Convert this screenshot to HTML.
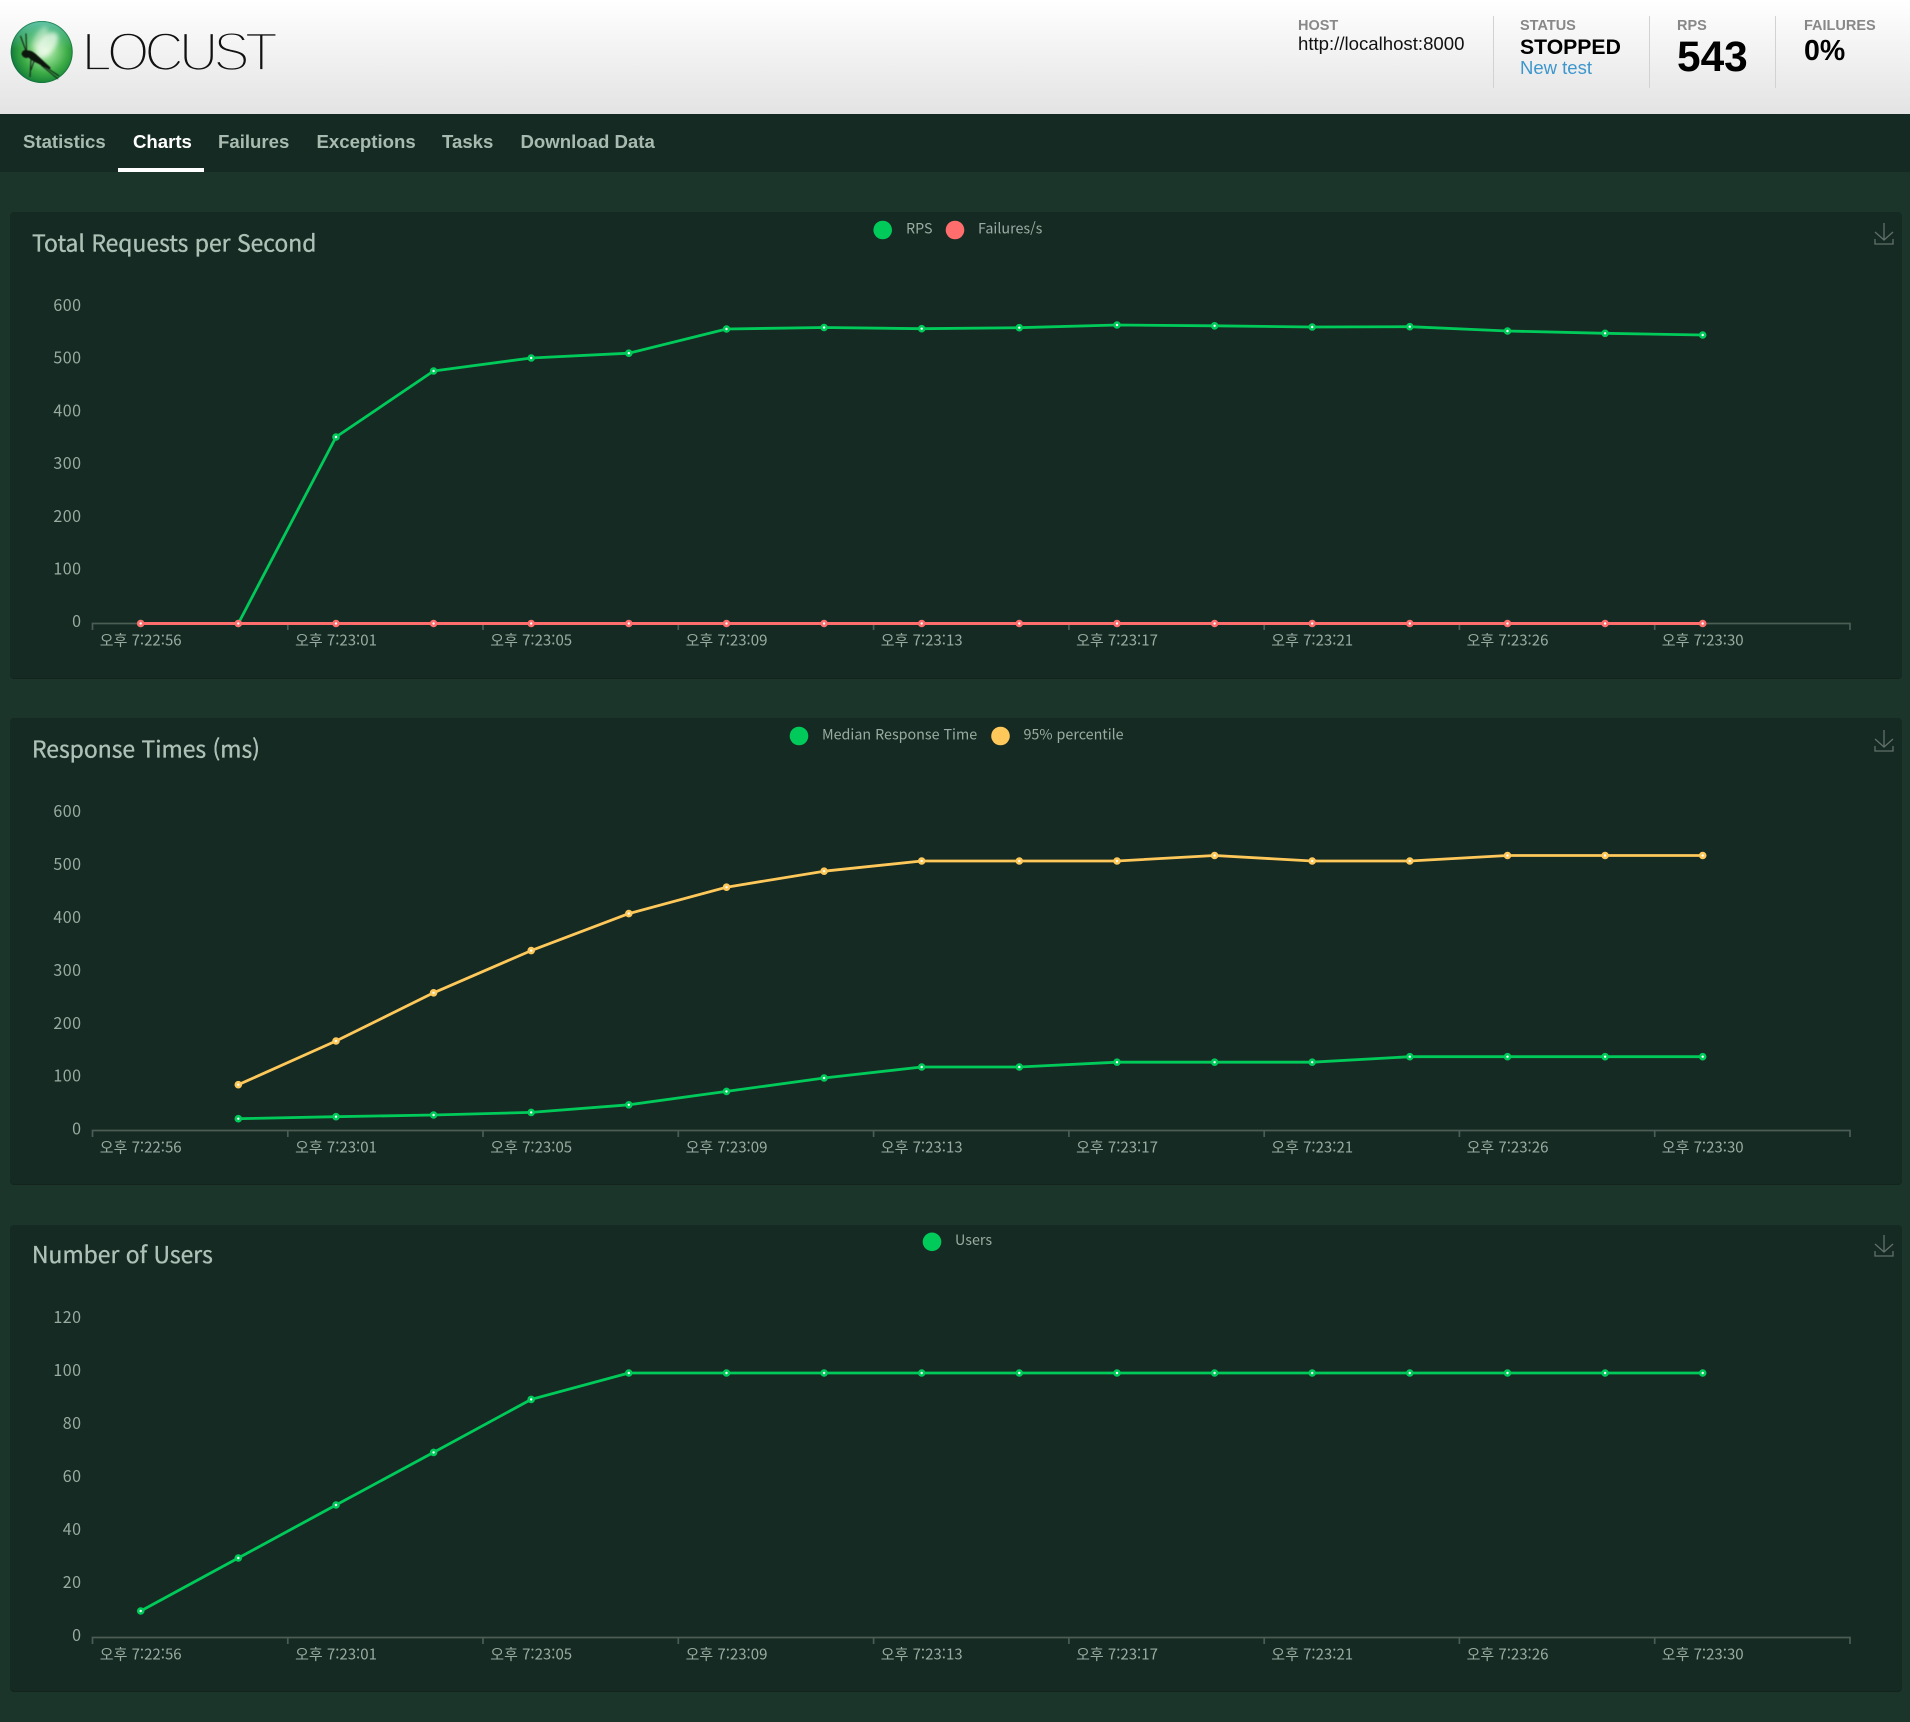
<!DOCTYPE html>
<html lang="ko">
<head>
<meta charset="utf-8">
<title>Locust</title>
<style>
html,body{margin:0;padding:0;width:1910px;height:1722px;overflow:hidden;background:#1b352b;}
body{position:relative;font-family:"Liberation Sans",Arial,sans-serif;}
#hd{position:absolute;left:0;top:0;width:1910px;height:114px;background:linear-gradient(#fff,#e3e3e3);}
#nav{position:absolute;left:0;top:114px;width:1910px;height:58px;background:#152a22;}
#nav span{position:absolute;top:17px;font-size:18.6px;line-height:22px;font-weight:bold;color:#a9bbb1;white-space:nowrap;}
#nav i{position:absolute;left:118px;top:54px;width:86px;height:4px;background:#fff;}
.t{position:absolute;white-space:nowrap;}
.lb{font-size:14.5px;line-height:16px;font-weight:bold;color:#888;top:18px;}
.dv{position:absolute;top:16px;width:1.5px;height:72px;background:#d2d2d2;}
.p{position:absolute;left:10px;width:1892px;background:#152a22;border-radius:4px;box-shadow:0 1px 0 #13241d;}
svg{position:absolute;left:0;top:0;}
.ti{font-family:"Noto Sans CJK KR","Liberation Sans",sans-serif;font-size:22.9px;fill:#aec1b7;stroke:#aec1b7;stroke-width:.35px;}
.n{font-family:"Noto Sans CJK KR","Liberation Sans",sans-serif;font-size:16px;letter-spacing:.5px;fill:#9aaca2;text-anchor:end;}
.l{font-family:"Noto Sans CJK KR","Liberation Sans",sans-serif;font-size:14.3px;fill:#9aaca2;}
.x{font-family:"Noto Sans CJK KR","Liberation Sans",sans-serif;font-size:15px;fill:#9aaca2;text-anchor:middle;}
</style>
</head>
<body>
<div id="hd"></div>
<div class="t lb" style="left:1298px">HOST</div>
<div class="t" style="left:1298px;top:33px;font-size:18.6px;line-height:22px;color:#111">http://localhost:8000</div>
<div class="dv" style="left:1492.5px"></div>
<div class="t lb" style="left:1520px">STATUS</div>
<div class="t" style="left:1520px;top:34.5px;font-size:21.2px;line-height:25px;font-weight:bold;color:#000">STOPPED</div>
<div class="t" style="left:1520px;top:57px;font-size:18.5px;line-height:22px;color:#3d96cc">New test</div>
<div class="dv" style="left:1648.5px"></div>
<div class="t lb" style="left:1677px">RPS</div>
<div class="t" style="left:1677px;top:33px;font-size:42.4px;line-height:48px;font-weight:bold;color:#000">543</div>
<div class="dv" style="left:1774.5px"></div>
<div class="t lb" style="left:1804px">FAILURES</div>
<div class="t" style="left:1804px;top:34px;font-size:28.5px;line-height:34px;font-weight:bold;color:#000">0%</div>

<svg width="300" height="114" viewBox="0 0 300 114" style="left:0;top:0">
<defs>
<radialGradient id="sp" cx="55%" cy="48%" r="58%">
<stop offset="0" stop-color="#c8eec4"/><stop offset=".3" stop-color="#84d585"/><stop offset=".62" stop-color="#3dac46"/><stop offset=".86" stop-color="#1d8a3a"/><stop offset="1" stop-color="#0e6a4a"/>
</radialGradient>
<linearGradient id="tp" x1="0" y1="0" x2="0" y2="1"><stop offset="0" stop-color="#66c8b4" stop-opacity=".9"/><stop offset=".45" stop-color="#66c8b4" stop-opacity="0"/></linearGradient>
<linearGradient id="bgst" gradientUnits="userSpaceOnUse" x1="0" y1="0" x2="0" y2="114"><stop offset="0" stop-color="#fff"/><stop offset="1" stop-color="#e3e3e3"/></linearGradient>
<filter id="bl"><feGaussianBlur stdDeviation=".5"/></filter>
<filter id="bw"><feGaussianBlur stdDeviation="2"/></filter>
</defs>
<circle cx="41.7" cy="52" r="31" fill="url(#sp)"/>
<circle cx="41.7" cy="52" r="31" fill="url(#tp)"/>
<circle cx="41.7" cy="52" r="30.5" fill="none" stroke="#0f6a3a" stroke-opacity=".6" stroke-width="1"/>
<g filter="url(#bw)">
<ellipse cx="40" cy="38" rx="5" ry="13" transform="rotate(30 40 38)" fill="#e6f6dc" fill-opacity=".5"/>
<ellipse cx="47" cy="45" rx="8" ry="15" transform="rotate(38 47 45)" fill="#f6fdf2" fill-opacity=".7"/>
</g>
<g filter="url(#bl)">
<path d="M21.5 54 C22 50.5 25 49 28 50.5 C31 50 35 53 38 56 L50.5 67.5 C51 69 49 69.5 47 68.5 L37 63 C33 61.5 30 59 28.5 57.5 C26 58.5 23 58 21.5 54Z" fill="#0c120e"/>
<path d="M26 51 L20.5 36 M26.5 50 L26 33.5 M31 59 L30 77 M34 61 L31 70 M41 65 L58 79 M47 68 L59 76" stroke="#14241a" stroke-width="1.1" fill="none"/>
</g>
<text x="81.5" y="70.5" font-family="'Liberation Sans',sans-serif" font-size="55" letter-spacing="-5.3" fill="#111" stroke="url(#bgst)" stroke-width="2.8">LOCUST</text>
</svg>

<div id="nav">
<span style="left:23px">Statistics</span>
<span style="left:133px;color:#fff">Charts</span>
<span style="left:218px">Failures</span>
<span style="left:316.5px">Exceptions</span>
<span style="left:442px">Tasks</span>
<span style="left:520.5px">Download Data</span>
<i></i>
</div>

<div class="p" style="top:212px;height:465.5px"></div>
<div class="p" style="top:718px;height:465.5px"></div>
<div class="p" style="top:1224.5px;height:466.5px"></div>

<svg width="1910" height="1722" viewBox="0 0 1910 1722">
<defs>
<marker id="mg" markerUnits="userSpaceOnUse" markerWidth="10" markerHeight="10" refX="5" refY="5"><circle cx="5" cy="5" r="2.5" fill="#fff" stroke="#00ca5a" stroke-width="2.6"/></marker>
<marker id="mr" markerUnits="userSpaceOnUse" markerWidth="10" markerHeight="10" refX="5" refY="5"><circle cx="5" cy="5" r="2.5" fill="#fff" stroke="#ff6d6d" stroke-width="2.6"/></marker>
<marker id="my" markerUnits="userSpaceOnUse" markerWidth="10" markerHeight="10" refX="5" refY="5"><circle cx="5" cy="5" r="2.5" fill="#fff" stroke="#ffc85a" stroke-width="2.6"/></marker>
<g id="dl"><path d="M1884 223V240M1875 232L1884 240L1893 232M1875 239V244H1893V239" fill="none" stroke="#62706a" stroke-width="1.3"/></g>
<path id="ax" d="M92.5 630V623.5H1850V630M287.8 623.5V630M483 623.5V630M678.3 623.5V630M873.6 623.5V630M1068.9 623.5V630M1264.2 623.5V630M1459.4 623.5V630M1654.7 623.5V630" fill="none" stroke="#4b5d54" stroke-width="1.7"/>
<g id="xl">
<text class="x" x="140.7" y="645.5">오후 7:22:56</text>
<text class="x" x="336" y="645.5">오후 7:23:01</text>
<text class="x" x="531.2" y="645.5">오후 7:23:05</text>
<text class="x" x="726.5" y="645.5">오후 7:23:09</text>
<text class="x" x="921.7" y="645.5">오후 7:23:13</text>
<text class="x" x="1117" y="645.5">오후 7:23:17</text>
<text class="x" x="1312.2" y="645.5">오후 7:23:21</text>
<text class="x" x="1507.5" y="645.5">오후 7:23:26</text>
<text class="x" x="1702.7" y="645.5">오후 7:23:30</text>
</g>
</defs>

<!-- panel 1 -->
<text class="ti" x="32" y="251.5">Total Requests per Second</text>
<circle cx="882.7" cy="230" r="9.3" fill="#00ca5a"/><text class="l" x="906" y="233.5">RPS</text>
<circle cx="955" cy="230" r="9.3" fill="#ff6d6d"/><text class="l" x="978" y="233.5">Failures/s</text>
<use href="#dl"/>
<text class="n" x="81.5" y="627">0</text>
<text class="n" x="81.5" y="574.5">100</text>
<text class="n" x="81.5" y="521.8">200</text>
<text class="n" x="81.5" y="469">300</text>
<text class="n" x="81.5" y="416.4">400</text>
<text class="n" x="81.5" y="363.6">500</text>
<text class="n" x="81.5" y="310.8">600</text>
<use href="#ax"/>
<use href="#xl"/>
<polyline fill="none" stroke="#00ca5a" stroke-width="2.8" stroke-linejoin="round" marker-start="url(#mg)" marker-mid="url(#mg)" marker-end="url(#mg)" points="140.7,623.5 238.3,623.5 336,437 433.6,371 531.2,358 628.8,353.2 726.5,329 824.1,327.5 921.7,328.7 1019.3,327.7 1117,325 1214.6,325.8 1312.2,327 1409.8,326.7 1507.5,331 1605.1,333.3 1702.7,335"/>
<polyline fill="none" stroke="#ff6d6d" stroke-width="3" marker-start="url(#mr)" marker-mid="url(#mr)" marker-end="url(#mr)" points="140.7,623.5 238.3,623.5 336,623.5 433.6,623.5 531.2,623.5 628.8,623.5 726.5,623.5 824.1,623.5 921.7,623.5 1019.3,623.5 1117,623.5 1214.6,623.5 1312.2,623.5 1409.8,623.5 1507.5,623.5 1605.1,623.5 1702.7,623.5"/>

<!-- panel 2 -->
<text class="ti" x="32" y="757.5">Response Times (ms)</text>
<circle cx="799" cy="736" r="9.3" fill="#00ca5a"/><text class="l" x="822" y="739.5">Median Response Time</text>
<circle cx="1000.5" cy="736" r="9.3" fill="#ffc85a"/><text class="l" x="1023.5" y="739.5">95% percentile</text>
<use href="#dl" y="507"/>
<text class="n" x="81.5" y="1134.5">0</text>
<text class="n" x="81.5" y="1081.7">100</text>
<text class="n" x="81.5" y="1028.8">200</text>
<text class="n" x="81.5" y="976">300</text>
<text class="n" x="81.5" y="923">400</text>
<text class="n" x="81.5" y="870.2">500</text>
<text class="n" x="81.5" y="817">600</text>
<use href="#ax" y="507"/>
<use href="#xl" y="507"/>
<polyline fill="none" stroke="#00ca5a" stroke-width="2.8" stroke-linejoin="round" marker-start="url(#mg)" marker-mid="url(#mg)" marker-end="url(#mg)" points="238.3,1118.7 336,1116.7 433.6,1115 531.2,1112.4 628.8,1104.8 726.5,1091.4 824.1,1078 921.7,1067 1019.3,1067 1117,1062.2 1214.6,1062.2 1312.2,1062.2 1409.8,1056.7 1507.5,1056.7 1605.1,1056.7 1702.7,1056.7"/>
<polyline fill="none" stroke="#ffc85a" stroke-width="2.8" stroke-linejoin="round" marker-start="url(#my)" marker-mid="url(#my)" marker-end="url(#my)" points="238.3,1084.7 336,1041 433.6,992.8 531.2,950.6 628.8,913.6 726.5,887.2 824.1,871.2 921.7,861 1019.3,861 1117,861 1214.6,855.5 1312.2,861 1409.8,861 1507.5,855.5 1605.1,855.5 1702.7,855.5"/>

<!-- panel 3 -->
<text class="ti" x="32" y="1263">Number of Users</text>
<circle cx="932" cy="1241.8" r="9.3" fill="#00ca5a"/><text class="l" x="955" y="1245">Users</text>
<use href="#dl" y="1012"/>
<use href="#ax" y="1014"/>
<use href="#xl" y="1014"/>
<text class="n" x="81.5" y="1640.8">0</text>
<text class="n" x="81.5" y="1588">20</text>
<text class="n" x="81.5" y="1535">40</text>
<text class="n" x="81.5" y="1482">60</text>
<text class="n" x="81.5" y="1429">80</text>
<text class="n" x="81.5" y="1376">100</text>
<text class="n" x="81.5" y="1322.8">120</text>
<polyline fill="none" stroke="#00ca5a" stroke-width="2.8" stroke-linejoin="round" marker-start="url(#mg)" marker-mid="url(#mg)" marker-end="url(#mg)" points="140.7,1611 238.3,1558 336,1505 433.6,1452.4 531.2,1399.4 628.8,1373 726.5,1373 824.1,1373 921.7,1373 1019.3,1373 1117,1373 1214.6,1373 1312.2,1373 1409.8,1373 1507.5,1373 1605.1,1373 1702.7,1373"/>
</svg>
</body>
</html>
